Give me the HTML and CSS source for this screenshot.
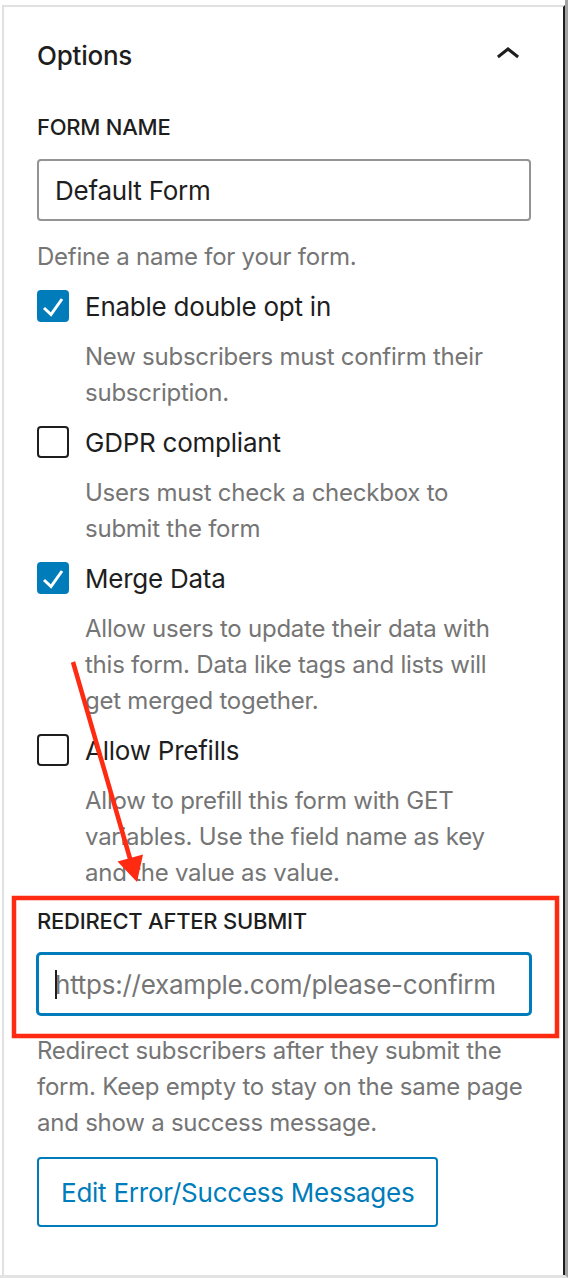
FILE: index.html
```html
<!DOCTYPE html>
<html lang="en">
<head>
<meta charset="utf-8">
<title>Options</title>
<link rel="stylesheet" href="styles.css">
</head>
<body>
<div class="screen">
  <div class="panel">
    <div class="title">
      <span>Options</span>
      <svg class="chevron" viewBox="0 0 24 24" width="48" height="48" aria-hidden="true"><path d="M6.5 12.4L12 8l5.5 4.4-.9 1.2L12 10l-4.6 3.6-.9-1.2z"/></svg>
    </div>

    <section class="field first">
      <div class="field-label">Form name</div>
      <input class="text-input" type="text" value="Default Form">
      <p class="help">Define a name for your form.</p>
    </section>

    <div class="check">
      <span class="box checked"><svg viewBox="0 0 32 32" width="32" height="32"><polyline points="7,18 14,24.5 25,9"/></svg></span>
      <span class="check-label">Enable double opt in</span>
    </div>
    <p class="help indent">New subscribers must confirm their subscription.</p>

    <div class="check">
      <span class="box"></span>
      <span class="check-label">GDPR compliant</span>
    </div>
    <p class="help indent">Users must check a checkbox to submit the form</p>

    <div class="check">
      <span class="box checked"><svg viewBox="0 0 32 32" width="32" height="32"><polyline points="7,18 14,24.5 25,9"/></svg></span>
      <span class="check-label">Merge Data</span>
    </div>
    <p class="help indent">Allow users to update their data with this form. Data like tags and lists will get merged together.</p>

    <div class="check">
      <span class="box"></span>
      <span class="check-label">Allow Prefills</span>
    </div>
    <p class="help indent">Allow to prefill this form with GET variables. Use the field name as key and the value as value.</p>

    <section class="field redirect">
      <div class="field-label">Redirect after submit</div>
      <div class="input-wrap">
        <input class="text-input focused" type="text" placeholder="https://example.com/please-confirm">
        <span class="caret"></span>
      </div>
      <p class="help">Redirect subscribers after they submit the form. Keep empty to stay on the same page and show a success message.</p>
    </section>

    <button class="btn" type="button">Edit Error/Success Messages</button>
  </div>

  <svg class="annotation" width="568" height="1278" viewBox="0 0 568 1278" aria-hidden="true">
    <rect x="14" y="898" width="543" height="138" fill="none" stroke="#ff2a12" stroke-width="4.5"/>
    <line x1="73" y1="662" x2="131" y2="862" stroke="#ff2a12" stroke-width="4.5"/>
    <polygon points="137,882 117.5,861.5 143,854.5" fill="#ff2a12"/>
  </svg>
</div>
</body>
</html>
```

FILE: styles.css
```css
html, body {
  margin: 0;
  background: #ffffff;
}

body {
  font-family: Inter, "Noto Sans", "Liberation Sans", sans-serif;
  color: #1e1e1e;
  letter-spacing: -0.015em;
}

.screen {
  position: relative;
  width: 568px;
  height: 1278px;
  box-sizing: border-box;
  padding: 5px 0 0 2px;
  border-right: 3px solid #a3a3a3;
  border-bottom: 3px solid #e3e3e3;
  background: #ffffff;
}

.panel {
  box-sizing: border-box;
  height: 100%;
  border-top: 2px solid #e0e0e0;
  border-left: 2px solid #e0e0e0;
  border-right: 2px solid #1e1e1e;
  padding: 0 32px 0 33px;
}

.title {
  height: 96px;
  display: flex;
  align-items: center;
  justify-content: space-between;
  font-size: 26px;
  font-weight: 500;
}

.chevron {
  fill: #1e1e1e;
  margin-right: -1px;
}

.field.first {
  padding-top: 8px;
}

.field.redirect {
  margin-top: 14px;
}

.field-label {
  font-size: 22px;
  font-weight: 500;
  line-height: 32px;
  text-transform: uppercase;
  margin-bottom: 16px;
}

.input-wrap {
  position: relative;
}

.text-input {
  display: block;
  width: 100%;
  height: 62px;
  box-sizing: border-box;
  margin: 0;
  padding: 0 16px;
  border: 2px solid #949494;
  border-radius: 4px;
  font-family: inherit;
  font-size: 26px;
  letter-spacing: inherit;
  color: #1e1e1e;
  background: #ffffff;
  outline: none;
}

.text-input::placeholder {
  color: #757575;
}

.text-input.focused {
  border-color: #007cba;
  box-shadow: 0 0 0 1px #007cba;
}

.caret {
  position: absolute;
  left: 18px;
  top: 17px;
  width: 2px;
  height: 29px;
  background: #1e1e1e;
}

.help {
  margin: 18px 0 0;
  font-size: 24px;
  line-height: 36px;
  color: #757575;
}

.help.indent {
  margin-top: 17px;
  padding-left: 48px;
  padding-right: 20px;
}

.check {
  display: flex;
  align-items: center;
  gap: 16px;
  height: 32px;
  margin-top: 15px;
  font-size: 26px;
}

.box {
  flex: none;
  width: 32px;
  height: 32px;
  box-sizing: border-box;
  border: 2px solid #1e1e1e;
  border-radius: 4px;
  background: #ffffff;
}

.box.checked {
  border-color: #007cba;
  background: #007cba;
}

.box svg {
  display: block;
  margin: -2px;
  fill: none;
  stroke: #ffffff;
  stroke-width: 3;
}

.btn {
  display: block;
  margin-top: 16px;
  height: 70px;
  padding: 0 22px;
  border: 2px solid #007cba;
  border-radius: 4px;
  background: #ffffff;
  color: #007cba;
  font-family: inherit;
  font-size: 26px;
  letter-spacing: inherit;
  cursor: pointer;
}

.annotation {
  position: absolute;
  top: 0;
  left: 0;
  pointer-events: none;
}
```
